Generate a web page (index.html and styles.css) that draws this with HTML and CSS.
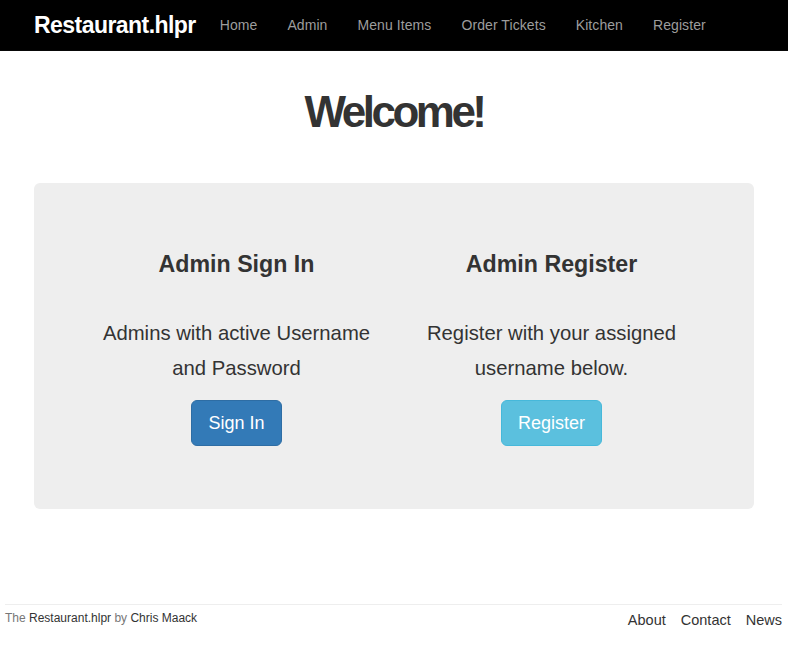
FILE: index.html
```html
<!DOCTYPE html>
<html>
<head>
<meta charset="utf-8">
<link rel="stylesheet" href="styles.css">
</head>
<body>
<nav class="navbar">
  <div class="container nav-inner">
    <a class="brand" href="#">Restaurant.hlpr</a>
    <ul class="nav-links">
      <li><a href="#">Home</a></li>
      <li><a href="#">Admin</a></li>
      <li><a href="#">Menu Items</a></li>
      <li><a href="#">Order Tickets</a></li>
      <li><a href="#">Kitchen</a></li>
      <li><a href="#">Register</a></li>
    </ul>
  </div>
</nav>
<main class="container">
  <h1 class="title">Welcome!</h1>
  <section class="jumbotron">
    <div class="row">
      <div class="col">
        <h3>Admin Sign In</h3>
        <p class="lead">Admins with active Username and Password</p>
        <p class="btn-wrap"><a class="btn btn-primary" href="#">Sign In</a></p>
      </div>
      <div class="col">
        <h3>Admin Register</h3>
        <p class="lead">Register with your assigned username below.</p>
        <p class="btn-wrap"><a class="btn btn-info" href="#">Register</a></p>
      </div>
    </div>
  </section>
</main>
<footer class="footer">
  <div class="footer-inner">
    <p class="credit">The <a href="#">Restaurant.hlpr</a> by <a href="#">Chris Maack</a></p>
    <ul class="footer-links">
      <li><a href="#">About</a></li>
      <li><a href="#">Contact</a></li>
      <li><a href="#">News</a></li>
    </ul>
  </div>
</footer>
</body>
</html>
```
FILE: styles.css
```css
* { box-sizing: border-box; }
html, body { margin: 0; padding: 0; }
body {
  font-family: "Liberation Sans", Arial, sans-serif;
  font-size: 14px;
  line-height: 1.42857;
  color: #333;
  background: #fff;
}
a { text-decoration: none; }
ul { list-style: none; margin: 0; padding: 0; }

.container {
  width: 750px;
  margin: 0 auto;
  padding: 0 15px;
}

.navbar {
  background: #000;
  border-bottom: 1px solid #080808;
  height: 51px;
}
.nav-inner {
  display: flex;
  align-items: center;
  height: 50px;
}
.brand {
  color: #fff;
  font-weight: bold;
  font-size: 23px;
  letter-spacing: -0.55px;
  line-height: 50px;
  margin-right: 9px;
}
.nav-links { display: flex; }
.nav-links a {
  display: block;
  color: #9d9d9d;
  padding: 0 15px;
  line-height: 50px;
  font-size: 14px;
  letter-spacing: 0.08px;
}

.title {
  text-align: center;
  font-size: 44px;
  font-weight: bold;
  letter-spacing: -3.5px;
  line-height: 48px;
  margin: 37px 0 47px;
  color: #333;
}

.jumbotron {
  background: #eee;
  border-radius: 6px;
  padding: 48px 60px;
  margin-bottom: 30px;
}
.row {
  display: flex;
  margin: 0 -15px;
}
.col {
  flex: 1 1 0;
  padding: 0 15px;
  text-align: center;
}
.col h3 {
  font-size: 23.2px;
  font-weight: bold;
  line-height: 26px;
  margin: 20px 0 10px;
  color: #333;
}
.lead {
  font-size: 20.3px;
  font-weight: normal;
  line-height: 35px;
  margin: 39px -6px 13px;
  color: #333;
}
.btn-wrap {
  margin: 0 0 15px;
  line-height: 46px;
}
.btn {
  display: inline-block;
  font-size: 18px;
  line-height: 24px;
  padding: 10px 16px;
  border-radius: 6px;
  border: 1px solid transparent;
  color: #fff;
  vertical-align: middle;
}
.btn-primary { background: #337ab7; border-color: #2e6da4; }
.btn-info { background: #5bc0de; border-color: #46b8da; }

.footer {
  margin-top: 95px;
}
.footer-inner {
  margin: 0 6px 0 5px;
  border-top: 1px solid #eee;
  display: flex;
  justify-content: space-between;
  align-items: flex-start;
}
.credit {
  margin: 5px 0 0;
  font-size: 12px;
  color: #777;
}
.credit a { color: #333; }
.footer-links {
  display: flex;
  gap: 15px;
  margin-top: 5px;
}
.footer-links a {
  color: #333;
  font-size: 14.5px;
}
```
